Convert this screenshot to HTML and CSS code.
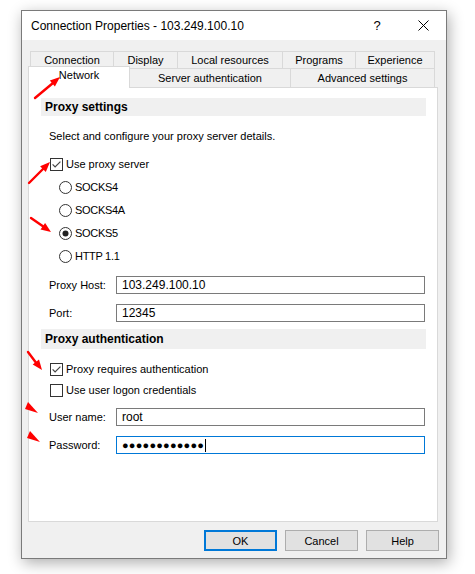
FILE: index.html
```html
<!DOCTYPE html>
<html>
<head>
<meta charset="utf-8">
<title>Connection Properties</title>
<link rel="stylesheet" href="styles.css">
</head>
<body>
<div class="window">
  <div class="titlebar">
    <span class="title">Connection Properties - 103.249.100.10</span>
    <span class="tb-btn help-q">?</span>
    <span class="tb-btn close-x"><svg width="11" height="11" viewBox="0 0 11 11"><path d="M0.5 0.5 L10.5 10.5 M10.5 0.5 L0.5 10.5" stroke="#000" stroke-width="1" fill="none"/></svg></span>
  </div>
  <div class="client">
    <div class="tabs">
      <div class="tab-row row1">
        <div class="tab w-conn">Connection</div>
        <div class="tab w-disp">Display</div>
        <div class="tab w-local">Local resources</div>
        <div class="tab w-prog">Programs</div>
        <div class="tab w-exp last">Experience</div>
      </div>
      <div class="tab-row row2">
        <div class="tab sel w-net">Network</div>
        <div class="tab w-srv">Server authentication</div>
        <div class="tab w-adv last">Advanced settings</div>
      </div>
    </div>
    <div class="panel">
      <div class="section s1">Proxy settings</div>
      <div class="desc">Select and configure your proxy server details.</div>
      <div class="check c1">
        <svg class="cb" width="13" height="13" viewBox="0 0 13 13"><rect x="0.5" y="0.5" width="12" height="12" fill="#fff" stroke="#333"/><path d="M2.6 6.4 L5.1 8.9 L10.4 3.6" fill="none" stroke="#444" stroke-width="1.2"/></svg>
        <span>Use proxy server</span>
      </div>
      <div class="radio r1">
        <svg class="rb" width="13" height="13" viewBox="0 0 13 13"><circle cx="6.5" cy="6.5" r="6" fill="#fff" stroke="#333"/></svg>
        <span class="caps">SOCKS4</span>
      </div>
      <div class="radio">
        <svg class="rb" width="13" height="13" viewBox="0 0 13 13"><circle cx="6.5" cy="6.5" r="6" fill="#fff" stroke="#333"/></svg>
        <span class="caps">SOCKS4A</span>
      </div>
      <div class="radio">
        <svg class="rb" width="13" height="13" viewBox="0 0 13 13"><circle cx="6.5" cy="6.5" r="6" fill="#fff" stroke="#333"/><circle cx="6.5" cy="6.5" r="3" fill="#222"/></svg>
        <span class="caps">SOCKS5</span>
      </div>
      <div class="radio">
        <svg class="rb" width="13" height="13" viewBox="0 0 13 13"><circle cx="6.5" cy="6.5" r="6" fill="#fff" stroke="#333"/></svg>
        <span class="caps">HTTP 1.1</span>
      </div>
      <div class="field f-host">
        <span class="label">Proxy Host:</span>
        <div class="input"><span class="val">103.249.100.10</span></div>
      </div>
      <div class="field f-gap">
        <span class="label">Port:</span>
        <div class="input"><span class="val">12345</span></div>
      </div>
      <div class="section s2">Proxy authentication</div>
      <div class="check c2">
        <svg class="cb" width="13" height="13" viewBox="0 0 13 13"><rect x="0.5" y="0.5" width="12" height="12" fill="#fff" stroke="#333"/><path d="M2.6 6.4 L5.1 8.9 L10.4 3.6" fill="none" stroke="#444" stroke-width="1.2"/></svg>
        <span>Proxy requires authentication</span>
      </div>
      <div class="check c3">
        <svg class="cb" width="13" height="13" viewBox="0 0 13 13"><rect x="0.5" y="0.5" width="12" height="12" fill="#fff" stroke="#333"/></svg>
        <span>Use user logon credentials</span>
      </div>
      <div class="field f-user">
        <span class="label">User name:</span>
        <div class="input"><span class="val">root</span></div>
      </div>
      <div class="field f-gap">
        <span class="label">Password:</span>
        <div class="input focus"><span class="dots">●●●●●●●●●●●●</span><span class="caret"></span></div>
      </div>
    </div>
    <div class="buttons">
      <div class="btn default">OK</div>
      <div class="btn">Cancel</div>
      <div class="btn">Help</div>
    </div>
  </div>
</div>
<svg class="annot" width="475" height="574" viewBox="0 0 475 574">
  <g stroke="#f00" stroke-width="2.4" stroke-linecap="round" fill="none">
    <line x1="35" y1="98" x2="53" y2="83"/>
    <line x1="29" y1="183" x2="44" y2="168"/>
    <line x1="31" y1="218" x2="44" y2="227"/>
    <line x1="28" y1="352" x2="37" y2="364"/>
  </g>
  <g fill="#f00">
    <polygon points="60,77 54.9,86.5 49.8,80.4"/>
    <polygon points="50,162 45.8,171.9 40.1,166.2"/>
    <polygon points="51,232 40.5,229.6 45.1,223"/>
    <polygon points="42,370 32.7,364.6 39,359.6"/>
    <polygon points="38,413 25,409 28,402"/>
    <polygon points="40,442 27,438 30,431"/>
  </g>
</svg>
</body>
</html>
```

FILE: styles.css
```css
* { box-sizing: border-box; }
html, body { margin: 0; padding: 0; }
body {
  width: 475px;
  height: 574px;
  background: #fff;
  font-family: "Liberation Sans", Arial, sans-serif;
  font-size: 11px;
  color: #000;
  position: relative;
  overflow: hidden;
}
.window {
  margin: 10px 0 0 21px;
  width: 426px;
  height: 549px;
  border: 1px solid #7a7a7a;
  box-shadow: 2px 4px 14px rgba(0, 0, 0, 0.32);
  background: #f0f0f0;
  display: flex;
  flex-direction: column;
}
.titlebar {
  height: 29px;
  background: #fff;
  display: flex;
  align-items: center;
  flex: none;
}
.title {
  flex: 1;
  padding-left: 9px;
  font-size: 12px;
}
.tb-btn {
  width: 46px;
  height: 29px;
  display: flex;
  align-items: center;
  justify-content: center;
  font-size: 13px;
}
.client {
  flex: 1;
  background: #f0f0f0;
  padding-top: 11px;
}
.tab-row { display: flex; }
.row1 { margin-left: 8px; height: 17px; }
.row2 { margin-left: 6px; height: 19px; align-items: flex-start; }
.tab {
  border: 1px solid #d9d9d9;
  border-bottom: none;
  border-right: none;
  background: #f0f0f0;
  display: flex;
  align-items: center;
  justify-content: center;
  white-space: nowrap;
}
.tab.last { border-right: 1px solid #d9d9d9; }
.row1 .tab { height: 17px; }
.row2 .tab { height: 19px; }
.row2 .tab.sel {
  height: 22px;
  margin-top: -2px;
  margin-bottom: -1px;
  background: #fff;
  position: relative;
  z-index: 1;
  border-right: 1px solid #d9d9d9;
  align-items: flex-start;
  padding-top: 2px;
}
.w-conn { width: 83px; }
.w-disp { width: 64px; }
.w-local { width: 105px; }
.w-prog { width: 73px; }
.w-exp { width: 80px; }
.w-net { width: 102px; }
.w-srv { width: 161px; margin-left: -1px; }
.w-adv { width: 145px; }

.panel {
  margin-left: 6px;
  width: 410px;
  height: 435px;
  background: #fff;
  border: 1px solid #d9d9d9;
  padding: 10px 11px 0 12px;
}
.section {
  height: 18px;
  background: #f0f0f0;
  font-weight: bold;
  font-size: 12px;
  padding-left: 4px;
  display: flex;
  align-items: center;
}
.s2 { margin-top: 7px; height: 20px; }
.desc {
  margin-top: 12px;
  height: 16px;
  line-height: 16px;
  padding-left: 8px;
}
.check {
  display: flex;
  align-items: center;
  height: 16px;
  padding-left: 9px;
  gap: 3px;
}
.c1 { margin-top: 12px; }
.c2 { margin-top: 12px; }
.c3 { margin-top: 5px; }
.radio {
  display: flex;
  align-items: center;
  height: 16px;
  padding-left: 18px;
  gap: 3px;
  margin-top: 7px;
}
.caps { letter-spacing: -0.3px; }
.cb, .rb { flex: none; display: block; }
.field {
  display: flex;
  align-items: center;
  height: 18px;
  padding-left: 8px;
}
.f-host { margin-top: 12px; }
.f-gap { margin-top: 10px; }
.f-user { margin-top: 10px; }
.label { width: 67px; flex: none; }
.input {
  width: 309px;
  height: 18px;
  border: 1px solid #7a7a7a;
  padding-left: 5px;
  display: flex;
  align-items: center;
  background: #fff;
}
.input.focus { border-color: #0078d7; }
.val { font-size: 12px; }
.dots { font-size: 11px; letter-spacing: 0.2px; }
.caret {
  display: block;
  width: 1px;
  height: 13px;
  background: #000;
  margin-left: 1px;
}
.buttons {
  display: flex;
  justify-content: flex-end;
  gap: 8px;
  margin-top: 8px;
  padding-right: 7px;
}
.btn {
  width: 73px;
  height: 21px;
  background: #e1e1e1;
  border: 1px solid #adadad;
  display: flex;
  align-items: center;
  justify-content: center;
}
.btn.default { border: 2px solid #0078d7; }
.annot {
  position: absolute;
  top: 0;
  left: 0;
  z-index: 10;
  pointer-events: none;
}
```
